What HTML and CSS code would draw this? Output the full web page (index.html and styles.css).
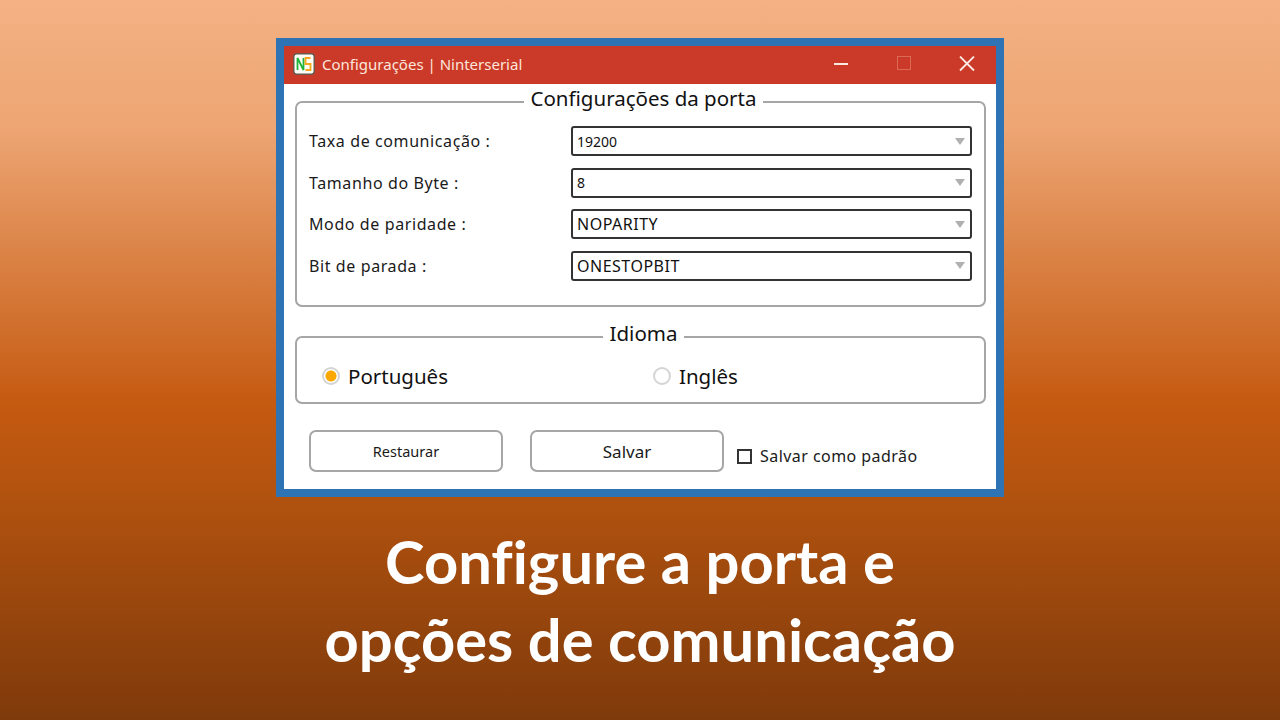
FILE: index.html
```html
<!DOCTYPE html>
<html lang="pt-BR">
<head>
    <meta charset="UTF-8">
    <meta name="viewport" content="width=device-width, initial-scale=1.0">
    <title>Configurações | Ninterserial</title>
    <link rel="stylesheet" href="styles.css">
</head>
<body>
    <div class="window">
        <div class="titlebar">
            <svg class="app-icon" width="22" height="22" viewBox="0 0 22 22">
                <rect x="0.750" y="0.750" width="20.500" height="20.500" rx="3" fill="#fdfdf5" stroke="#6b5a4c" stroke-width="1.500"/>
                <path d="M4.500 17V5l6 12V5" fill="none" stroke="#1fb53a" stroke-width="1.800"/>
                <path d="M17.500 5h-5v6h5v6h-5" fill="none" stroke="#f5a81c" stroke-width="1.800"/>
            </svg>
            <span class="window-title">Configurações | Ninterserial</span>
            <div class="window-buttons">
                <svg width="16" height="16" viewBox="0 0 16 16"><path d="M1 8h14" stroke="#fbe9e4" stroke-width="2"/></svg>
                <svg width="16" height="16" viewBox="0 0 16 16"><rect x="1.500" y="0.500" width="13" height="13" fill="none" stroke="#db6a55" stroke-width="1"/></svg>
                <svg width="16" height="16" viewBox="0 0 16 16"><path d="M1 0.500l14 14M15 0.500l-14 14" stroke="#fbe9e4" stroke-width="1.800"/></svg>
            </div>
        </div>
        <div class="content">
            <fieldset class="group port-group">
                <legend>Configurações da porta</legend>
                <div class="field-row">
                    <span class="field-label">Taxa de comunicação :</span>
                    <div class="combo small-value"><span>19200</span><i class="arrow"></i></div>
                </div>
                <div class="field-row">
                    <span class="field-label">Tamanho do Byte :</span>
                    <div class="combo small-value"><span>8</span><i class="arrow"></i></div>
                </div>
                <div class="field-row">
                    <span class="field-label">Modo de paridade :</span>
                    <div class="combo"><span>NOPARITY</span><i class="arrow"></i></div>
                </div>
                <div class="field-row">
                    <span class="field-label">Bit de parada :</span>
                    <div class="combo"><span>ONESTOPBIT</span><i class="arrow"></i></div>
                </div>
            </fieldset>
            <fieldset class="group lang-group">
                <legend>Idioma</legend>
                <div class="radio-row">
                    <div class="radio-cell"><i class="radio checked"></i><span>Português</span></div>
                    <div class="radio-cell"><i class="radio"></i><span>Inglês</span></div>
                </div>
            </fieldset>
            <div class="actions">
                <button type="button" class="btn btn-small">Restaurar</button>
                <button type="button" class="btn">Salvar</button>
                <div class="check-row"><i class="checkbox"></i><span>Salvar como padrão</span></div>
            </div>
        </div>
    </div>
    <h1 class="caption">Configure a porta e<br>opções de comunicação</h1>
</body>
</html>
```

FILE: styles.css
```css
html, body {
    margin: 0;
    padding: 0;
}
body {
    height: 720px;
    overflow: hidden;
    display: flex;
    flex-direction: column;
    align-items: center;
    padding-top: 38px;
    box-sizing: border-box;
    background: linear-gradient(180deg, #f4b183 0%, #eda573 18%, #c55a11 56%, #b3530f 68%, #7f3a0b 100%);
    font-family: "Noto Sans", "DejaVu Sans", sans-serif;
}
.window {
    width: 712px;
    height: 443px;
    border: 8px solid #2e74b5;
    background: #ffffff;
    display: flex;
    flex-direction: column;
}
.titlebar {
    height: 38px;
    box-sizing: border-box;
    padding: 0 0 3px 9px;
    background: #cb3a28;
    display: flex;
    align-items: center;
    flex-shrink: 0;
}
.app-icon {
    margin-right: 7px;
    flex-shrink: 0;
}
.window-title {
    color: #fbe6dc;
    font-size: 15px;
}
.window-buttons {
    margin-left: auto;
    margin-right: 21px;
    display: flex;
    gap: 47px;
}
.content {
    padding: 0 10px 0 11px;
    display: flex;
    flex-direction: column;
}
.group {
    margin: 0;
    border: 2px solid #a6a6a6;
    border-radius: 7px;
    min-width: 0;
}
.group legend {
    margin: 0 auto;
    padding: 0 7px 8px 7px;
    color: #111111;
    font-size: 20.500px;
    line-height: 30px;
}
.port-group {
    height: 224px;
    margin-top: -1px;
    padding: 5px 6px 0 12px;
    box-sizing: border-box;
}
.field-row {
    height: 41.500px;
    margin-right: 6px;
    display: flex;
    align-items: flex-start;
}
.field-label {
    width: 262px;
    font-size: 16px;
    line-height: 30px;
    color: #1a1a1a;
    letter-spacing: 0.600px;
}
.combo {
    flex: 1;
    height: 30px;
    box-sizing: border-box;
    border: 2px solid #333333;
    border-radius: 3px;
    display: flex;
    align-items: center;
    justify-content: space-between;
    padding: 0 4px 0 4px;
    font-size: 16px;
    letter-spacing: 0.500px;
    color: #111111;
    background: #ffffff;
}
.small-value {
    font-size: 14px;
    letter-spacing: 0;
}
.arrow {
    width: 0;
    height: 0;
    border-left: 5px solid transparent;
    border-right: 5px solid transparent;
    border-top: 7px solid #b0b0b0;
    margin-right: 1px;
}
.lang-group {
    height: 86px;
    margin-top: 11px;
    padding: 0 0 0 6px;
    box-sizing: border-box;
}
.radio-row {
    display: flex;
    align-items: center;
    padding: 6px 0 0 19px;
}
.radio-cell {
    width: 331px;
    display: flex;
    align-items: center;
    gap: 8px;
    font-size: 20.500px;
    color: #111111;
}
.radio {
    width: 18px;
    height: 18px;
    border-radius: 50%;
    border: 2px solid #d4d4d4;
    box-sizing: border-box;
    display: block;
}
.radio.checked {
    background: radial-gradient(circle, #fca800 0, #fca800 5px, #ffffff 6px);
}
.actions {
    display: flex;
    align-items: flex-start;
    margin-top: 26px;
    padding-left: 14px;
}
.btn {
    width: 194px;
    height: 42px;
    margin-right: 27px;
    border: 2px solid #a6a6a6;
    border-radius: 7px;
    background: #ffffff;
    color: #1a1a1a;
    font-family: inherit;
    font-size: 17px;
    padding: 0;
}
.btn-small {
    font-size: 14.500px;
}
.check-row {
    display: flex;
    align-items: center;
    gap: 8px;
    margin-left: -14px;
    margin-top: 15px;
    font-size: 16px;
    letter-spacing: 0.450px;
    color: #1a1a1a;
}
.checkbox {
    width: 15px;
    height: 15px;
    border: 2px solid #333333;
    box-sizing: border-box;
    display: block;
}
.caption {
    margin: 25px 0 0 0;
    color: #ffffff;
    font-family: "Lato", "Open Sans", sans-serif;
    font-size: 59.700px;
    font-weight: 700;
    line-height: 78px;
    text-align: center;
    font-variant-ligatures: none;
}
```
